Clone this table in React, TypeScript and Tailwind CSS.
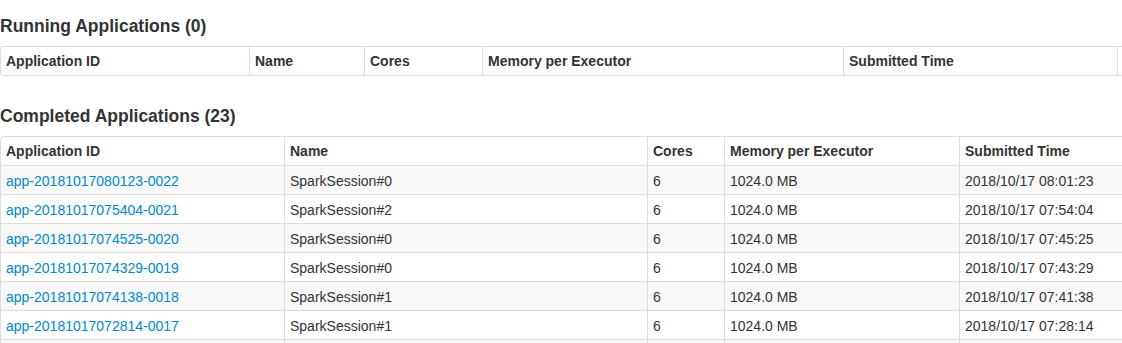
import React from 'react';

interface AppRow {
  id: string;
  name: string;
  cores: string;
  memory: string;
  submitted: string;
}

const completed: AppRow[] = [
  { id: 'app-20181017080123-0022', name: 'SparkSession#0', cores: '6', memory: '1024.0 MB', submitted: '2018/10/17 08:01:23' },
  { id: 'app-20181017075404-0021', name: 'SparkSession#2', cores: '6', memory: '1024.0 MB', submitted: '2018/10/17 07:54:04' },
  { id: 'app-20181017074525-0020', name: 'SparkSession#0', cores: '6', memory: '1024.0 MB', submitted: '2018/10/17 07:45:25' },
  { id: 'app-20181017074329-0019', name: 'SparkSession#0', cores: '6', memory: '1024.0 MB', submitted: '2018/10/17 07:43:29' },
  { id: 'app-20181017074138-0018', name: 'SparkSession#1', cores: '6', memory: '1024.0 MB', submitted: '2018/10/17 07:41:38' },
  { id: 'app-20181017072814-0017', name: 'SparkSession#1', cores: '6', memory: '1024.0 MB', submitted: '2018/10/17 07:28:14' },
  // next row only shows its top border at the bottom of the page
  { id: '', name: '', cores: '', memory: '', submitted: '' },
];

const headers = ['Application ID', 'Name', 'Cores', 'Memory per Executor', 'Submitted Time'];

const cell = 'border-l border-t border-[#dddddd] px-[5px] text-left align-top leading-5 whitespace-nowrap overflow-hidden';
const td = `${cell} pt-[5px] pb-[3px]`;

// the rest of the columns (user, state, duration) run off the right edge of the page
const AppTable: React.FC<{ widths: number[]; rows: AppRow[] }> = ({ widths, rows }) => (
  <table
    className="table-fixed border-separate border-spacing-0 border border-l-0 border-[#dddddd] rounded mb-5 text-[14px] text-[#333333]"
    style={{ width: widths.reduce((a, b) => a + b, 0) + 360 }}
  >
    <colgroup>
      {widths.map((w, i) => (
        <col key={i} style={{ width: w }} />
      ))}
      <col style={{ width: 120 }} />
      <col style={{ width: 120 }} />
      <col style={{ width: 120 }} />
    </colgroup>
    <thead>
      <tr>
        {headers.map((h, i) => (
          <th key={h} className={`${cell} py-1 border-t-0 font-bold ${i === 0 ? 'rounded-tl' : ''}`}>
            {h}
          </th>
        ))}
        <th className={`${cell} py-1 border-t-0`}>&nbsp;</th>
        <th className={`${cell} py-1 border-t-0`}>&nbsp;</th>
        <th className={`${cell} py-1 border-t-0`}>&nbsp;</th>
      </tr>
    </thead>
    <tbody>
      {rows.map((r, i) => (
        <tr key={i} className={i % 2 === 0 ? 'bg-[#f9f9f9]' : 'bg-white'}>
          <td className={td}>
            {r.id ? <a href="#" className="text-[#0088cc] no-underline">{r.id}</a> : '\u00a0'}
          </td>
          <td className={td}>{r.name || '\u00a0'}</td>
          <td className={td}>{r.cores || '\u00a0'}</td>
          <td className={td}>{r.memory || '\u00a0'}</td>
          <td className={td}>{r.submitted || '\u00a0'}</td>
          <td className={td}>&nbsp;</td>
          <td className={td}>&nbsp;</td>
          <td className={td}>&nbsp;</td>
        </tr>
      ))}
    </tbody>
  </table>
);

export default function App() {
  return (
    <div className="h-[343px] w-[1122px] overflow-hidden bg-white pt-1.5 font-['Liberation_Sans',Arial,sans-serif]">
      <h4 className="mt-2.5 mb-2.5 text-[17.5px] font-bold leading-5 text-[#333333]">Running Applications (0)</h4>
      <AppTable widths={[249, 115, 118, 361, 274]} rows={[]} />
      <h4 className="mt-[30px] mb-2.5 text-[17.5px] font-bold leading-5 text-[#333333]">Completed Applications (23)</h4>
      <AppTable widths={[284, 363, 77, 235, 200]} rows={completed} />
    </div>
  );
}
